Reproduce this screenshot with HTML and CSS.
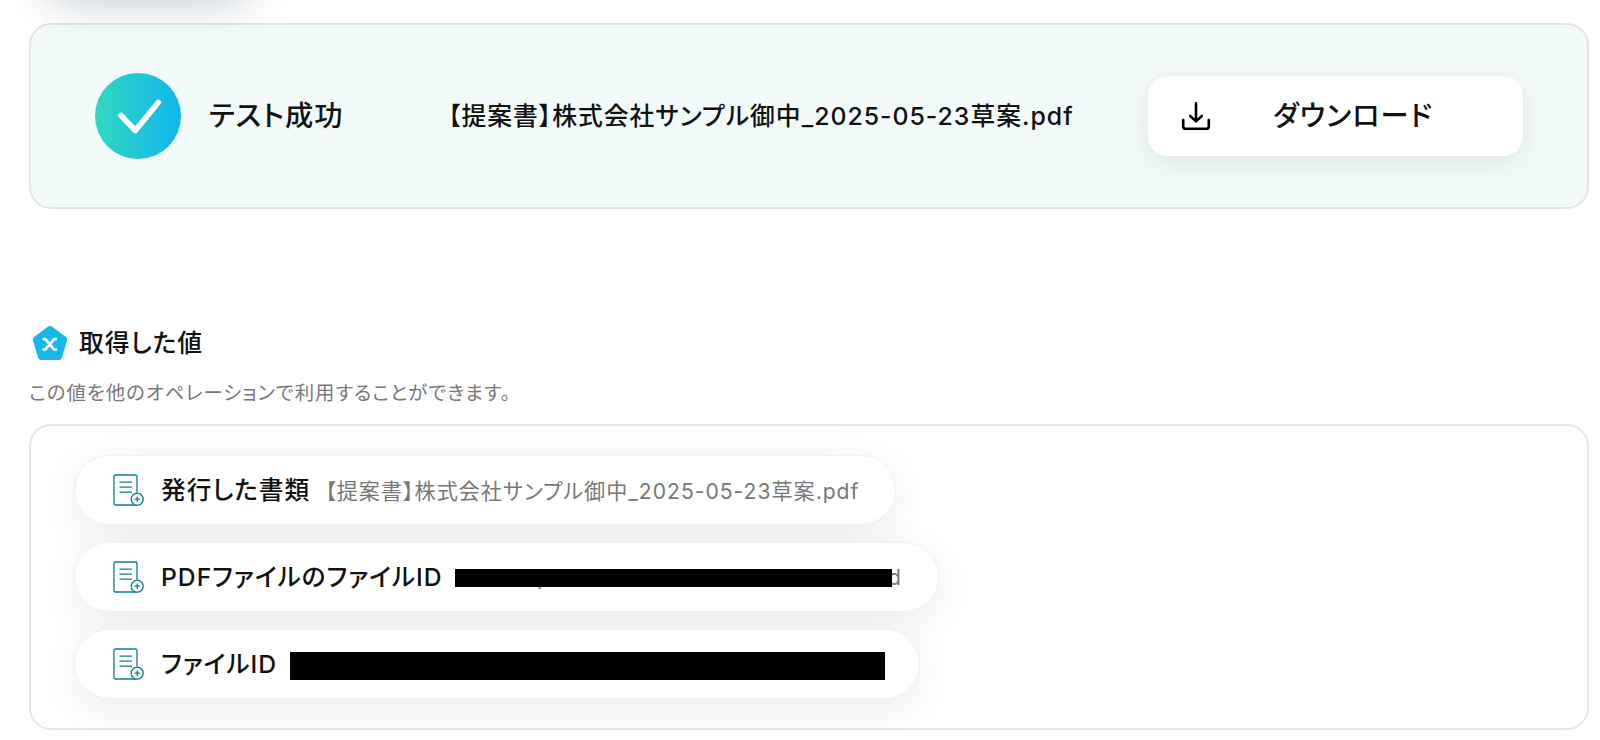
FILE: index.html
```html
<!DOCTYPE html>
<html lang="ja">
<head>
    <meta charset="UTF-8">
    <meta name="viewport" content="width=device-width, initial-scale=1.0">
    <title>テスト成功</title>
    <link rel="stylesheet" href="styles.css">
</head>
<body>

    <div class="container">
        <div class="test-button"></div>

        <!-- Test result -->
        <div class="result">
            <svg class="result-icon" viewBox="0 0 86 86">
                <defs>
                    <linearGradient id="success" x1="0" y1="0" x2="1" y2="0">
                        <stop offset="0" stop-color="#30d9c0"/>
                        <stop offset="1" stop-color="#11b5ec"/>
                    </linearGradient>
                </defs>
                <circle cx="43" cy="43" r="43" fill="url(#success)"/>
                <path d="M26 42.5L40.3 57.5L63.3 29.5" fill="none" stroke="#fff" stroke-width="5.6" stroke-linecap="round" stroke-linejoin="round"/>
            </svg>
            <div class="result-status">テスト成功</div>
            <div class="result-file">【提案書】株式会社サンプル御中_2025-05-23草案.pdf</div>
            <button class="download">
                <svg class="download-icon" viewBox="0 0 30 30" fill="none" stroke="#000" stroke-width="2.6" stroke-linecap="round" stroke-linejoin="round">
                    <path d="M15 2.2V20M9.2 15L15 20.4L20.8 15"/>
                    <path d="M2.2 19V25.2Q2.2 27.8 4.8 27.8H25.2Q27.8 27.8 27.8 25.2V19"/>
                </svg>
                <span class="download-text">ダウンロード</span>
            </button>
        </div>

        <!-- Output values -->
        <div class="values-title">
            <svg class="values-icon" viewBox="0 0 36 36">
                <path d="M18 4L32.2 14.5L27 32H9L3.8 14.5Z" fill="#15b8ea" stroke="#15b8ea" stroke-width="6" stroke-linejoin="round"/>
                <path d="M11.8 14.2H13.4L22.2 24.6H23.8M23.6 14.2H22.2L13.2 24.6H11.6" fill="none" stroke="#fff" stroke-width="2.8" stroke-linecap="round" stroke-linejoin="round"/>
            </svg>
            <h2>取得した値</h2>
        </div>
        <p class="values-note">この値を他のオペレーションで利用することができます。</p>

        <div class="values">
            <div class="value value-doc">
                <svg class="value-icon" viewBox="0 0 32 32" fill="none" stroke="#0f7c95" stroke-width="1.3">
                    <path d="M24 31H2.5Q1 31 1 29.5V2.5Q1 1 2.5 1H22.5Q24 1 24 2.5V18.5"/>
                    <path d="M6.5 8.2H19M6.5 13.2H19M6.5 18.2H19"/>
                    <circle cx="24.2" cy="25.2" r="6" fill="#fff"/>
                    <path d="M24.2 22.4V28M21.4 25.2H27"/>
                </svg>
                <span class="value-name">発行した書類</span>
                <span class="value-text">【提案書】株式会社サンプル御中_2025-05-23草案.pdf</span>
            </div>
            <div class="value value-pdf">
                <svg class="value-icon" viewBox="0 0 32 32" fill="none" stroke="#0f7c95" stroke-width="1.3">
                    <path d="M24 31H2.5Q1 31 1 29.5V2.5Q1 1 2.5 1H22.5Q24 1 24 2.5V18.5"/>
                    <path d="M6.5 8.2H19M6.5 13.2H19M6.5 18.2H19"/>
                    <circle cx="24.2" cy="25.2" r="6" fill="#fff"/>
                    <path d="M24.2 22.4V28M21.4 25.2H27"/>
                </svg>
                <span class="value-name">PDFファイルのファイルID</span>
                <span class="value-text masked"><span>p</span><span>d</span></span>
            </div>
            <div class="value value-id">
                <svg class="value-icon" viewBox="0 0 32 32" fill="none" stroke="#0f7c95" stroke-width="1.3">
                    <path d="M24 31H2.5Q1 31 1 29.5V2.5Q1 1 2.5 1H22.5Q24 1 24 2.5V18.5"/>
                    <path d="M6.5 8.2H19M6.5 13.2H19M6.5 18.2H19"/>
                    <circle cx="24.2" cy="25.2" r="6" fill="#fff"/>
                    <path d="M24.2 22.4V28M21.4 25.2H27"/>
                </svg>
                <span class="value-name">ファイルID</span>
                <span class="mask"></span>
            </div>
        </div>
    </div>

</body>
</html>
```
FILE: styles.css
```css
* {
    box-sizing: border-box;
}
body {
    font-family: Inter, "Noto Sans CJK JP", sans-serif;
    font-feature-settings: "palt";
    letter-spacing: 1px;
    margin: 0;
    color: #111;
    background-color: #fff;
    overflow: hidden;
}
.container {
    padding: 0 11px 0 29px;
}
.test-button {
    position: relative;
    z-index: 1;
    width: 200px;
    height: 80px;
    margin: -94px 0 37px 20px;
    border-radius: 20px;
    box-shadow: 0 12px 46px rgba(30, 60, 80, 0.32);
}

/* Test result */
.result {
    display: flex;
    align-items: center;
    height: 186px;
    padding: 0 64px;
    background: #f2fbfa;
    border: 2px solid #e3e4e4;
    border-radius: 22px;
}
.result-icon {
    width: 86px;
    height: 86px;
    flex: none;
}
.result-status {
    width: 239px;
    margin-left: 28px;
    padding-bottom: 6px;
    font-size: 28.3px;
    font-weight: 500;
    white-space: nowrap;
}
.result-file {
    padding-bottom: 5px;
    font-size: 24.8px;
    font-weight: 500;
    white-space: nowrap;
}
.download {
    display: flex;
    align-items: center;
    width: 375px;
    height: 80px;
    margin-left: auto;
    padding: 0 33px;
    border: none;
    border-radius: 20px;
    background: #fff;
    box-shadow: 0 8px 32px rgba(0, 0, 0, 0.09);
    color: inherit;
    font: inherit;
    font-feature-settings: inherit;
    letter-spacing: inherit;
    cursor: pointer;
}
.download-icon {
    width: 30px;
    height: 30px;
}
.download-text {
    margin-left: 62px;
    padding-bottom: 6px;
    font-size: 28.2px;
    font-weight: 500;
}

/* Output values */
.values-title {
    display: flex;
    align-items: center;
    height: 40px;
    margin-top: 114px;
    padding-left: 3px;
}
.values-icon {
    width: 36px;
    height: 36px;
}
.values-title h2 {
    margin: 0 0 0 11px;
    padding-bottom: 4px;
    font-size: 24.8px;
    font-weight: 500;
}
.values-note {
    height: 30px;
    margin: 15px 0 16px;
    color: #777;
    font-size: 19.4px;
    line-height: 30px;
}
.values {
    display: flex;
    flex-direction: column;
    align-items: flex-start;
    gap: 17px;
    height: 306px;
    padding: 29px 43px;
    border: 2px solid #e6e6e6;
    border-radius: 22px;
}
.value {
    display: flex;
    align-items: center;
    position: relative;
    height: 70px;
    padding-left: 38px;
    border: 1px solid #f2f2f2;
    border-radius: 35px;
    background: #fff;
    box-shadow: 0 10px 44px rgba(0, 0, 0, 0.08);
}
.value-doc {
    width: 822px;
}
.value-pdf {
    width: 865px;
}
.value-id {
    width: 846px;
}
.value-icon {
    width: 32px;
    height: 32px;
    flex: none;
    margin-right: 16px;
}
.value-name {
    padding-bottom: 4px;
    font-size: 24.7px;
    font-weight: 500;
    white-space: nowrap;
}
.value-text {
    margin-left: 15px;
    color: #777;
    font-size: 21.1px;
    white-space: nowrap;
}
.masked {
    display: flex;
    justify-content: space-between;
    position: absolute;
    left: 380px;
    width: 447px;
    margin: 0;
    padding-left: 82px;
}
.masked::after {
    content: "";
    position: absolute;
    top: 4px;
    left: 0;
    width: 437px;
    height: 18px;
    background: #000;
}
.mask {
    position: absolute;
    left: 215px;
    top: 22px;
    width: 595px;
    height: 28px;
    background: #000;
}
```
